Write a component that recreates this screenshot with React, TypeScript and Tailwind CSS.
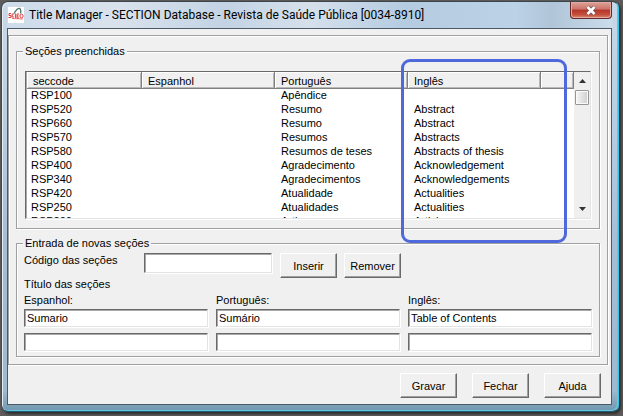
import React from "react";

const rows: [string, string, string, string][] = [
  ["RSP100", "", "Apêndice", ""],
  ["RSP520", "", "Resumo", "Abstract"],
  ["RSP660", "", "Resumo", "Abstract"],
  ["RSP570", "", "Resumos", "Abstracts"],
  ["RSP580", "", "Resumos de teses", "Abstracts of thesis"],
  ["RSP400", "", "Agradecimento", "Acknowledgement"],
  ["RSP340", "", "Agradecimentos", "Acknowledgements"],
  ["RSP420", "", "Atualidade", "Actualities"],
  ["RSP250", "", "Atualidades", "Actualities"],
  ["RSP200", "", "Artigos", "Articles"],
];

const sunken =
  "min-w-0 rounded-none border border-t-[#696969] border-l-[#696969] border-r-[#e3e3e3] border-b-[#e3e3e3] bg-white shadow-[inset_1px_1px_0_#a8a8a8,1px_1px_0_#fff] outline-none";

function PushButton({ children }: { children: React.ReactNode }) {
  return (
    <button
      type="button"
      className="h-[25px] w-[57px] shrink-0 border border-t-white border-l-white border-r-[#696969] border-b-[#696969] bg-[#f0f0f0] text-center text-[11px] leading-4 shadow-[inset_-1px_-1px_0_#a0a0a0]"
    >
      {children}
    </button>
  );
}

function Group({ title, className, children }: { title: string; className: string; children: React.ReactNode }) {
  return (
    <fieldset
      className={
        "relative min-w-0 border border-[#a0a0a0] shadow-[inset_1px_1px_0_#fff,1px_1px_0_#fff] " + className
      }
    >
      <legend className="bg-[#f0f0f0] px-0.5 leading-4">{title}</legend>
      {children}
    </fieldset>
  );
}

function HeaderCell({ children }: { children?: React.ReactNode }) {
  return (
    <th
      scope="col"
      className="h-[17px] border-r border-b border-[#808080] bg-[#f0f0f0] p-0 pt-px pl-1.5 text-left font-normal shadow-[inset_1px_1px_0_#fff,inset_-1px_-1px_0_#b8b8b8]"
    >
      {children}
    </th>
  );
}

function TitleFields({ id, label, value }: { id: string; label: string; value: string }) {
  return (
    <div className="flex min-w-0 flex-col">
      <label htmlFor={id} className="mb-0.5 leading-[14px]">
        {label}
      </label>
      <input id={id} type="text" defaultValue={value} className={"mb-1.5 h-[18px] px-0.5 " + sunken} />
      <input type="text" aria-label={label + " 2"} className={"h-[18px] px-0.5 " + sunken} />
    </div>
  );
}

function Logo() {
  return (
    <svg className="h-4 w-4 shrink-0" viewBox="0 0 16 16" aria-hidden="true">
      <rect width="16" height="16" fill="#fff" />
      <path d="M6 6.5C8 3 10 1 12 1.5C13 3 13 4.5 12.5 6.5" fill="none" stroke="#53766f" strokeWidth="1.3" />
      <g fill="none" stroke="#e03a3a" strokeWidth="1">
        <path d="M3 6.5H1V8.5H3V10.5H0.5M6 7H4.2V10H6M7.4 6.5V11M11 7H9V11H11M9 9H10.6" />
        <ellipse cx="13.5" cy="9" rx="1.6" ry="1.8" />
        <path d="M4 11.5L15 12" strokeWidth="0.7" />
      </g>
    </svg>
  );
}

export default function App() {
  return (
    <div className="min-h-screen bg-[#5e5c5b] pt-px pr-1 pb-1 pl-px font-['Liberation_Sans',Arial,sans-serif] text-[11px] text-black">
      <main className="rounded-[7px] border border-t-[#3c444c] border-r-[#35c5ea] border-b-[#1e5a70] border-l-[#3a4a58] bg-[linear-gradient(180deg,#c9d8e8_0%,#b9cde2_30%,#a5bdd5_60%,#9fb9d0_95%,#7098ae_100%)] pr-1.5 pb-1.5 pl-[5px] shadow-[inset_1px_1px_0_#e4eef6,inset_-1px_-1px_0_#63c6e2,2px_2px_3px_#2b2b2b]">
        <header className="flex h-[26px] items-start justify-between bg-[linear-gradient(90deg,#cddbea_0%,#d9e2ec_18%,#c3d3e4_36%,#d5e0eb_50%,#b4cbe1_66%,#bcd2e6_84%,#b0c5d8_90%,#cbdceb_100%)]">
          <h1 className="flex items-center gap-[5px] pt-1 pl-px font-['Roboto','Noto_Sans',sans-serif] text-xs leading-[18px] whitespace-nowrap">
            <Logo />
            Title Manager - SECTION Database - Revista de Saúde Pública [0034-8910]
          </h1>
          <button
            type="button"
            aria-label="Close"
            className="flex h-[17px] w-[42px] shrink-0 items-center justify-center rounded-b-[4px] border border-t-0 border-[#63282a] bg-[linear-gradient(180deg,#dda49a_0%,#cc7268_45%,#b53529_50%,#c4503c_80%,#dd8e72_100%)] shadow-[inset_0_0_0_1px_#e2aaa0]"
          >
            <svg className="h-[11px] w-3" viewBox="0 0 12 11" aria-hidden="true">
              <path d="M2.5 2L9.5 9M9.5 2L2.5 9" stroke="#70555a" strokeWidth="4" />
              <path d="M2.5 2L9.5 9M9.5 2L2.5 9" stroke="#fff" strokeWidth="2.5" />
            </svg>
          </button>
        </header>

        <div className="border border-[#4c5968] bg-[#f0f0f0] pt-1.5 pb-1.5">
          <div className="mr-[3px] border border-[#a0a0a0] p-[7px] shadow-[inset_1px_1px_0_#fff,1px_1px_0_#fff]">
            <Group title="Seções preenchidas" className="px-2 pt-3 pb-[9px] [&>legend]:-ml-0.5">
              <div className={"flex h-[148px] overflow-hidden " + sunken}>
                <div className="min-w-0 flex-1 overflow-hidden pl-px">
                  <table className="w-full table-fixed border-separate border-spacing-0 leading-[14px]">
                    <colgroup>
                      <col className="w-[115px]" />
                      <col className="w-[133px]" />
                      <col className="w-[133px]" />
                      <col className="w-[133px]" />
                      <col />
                    </colgroup>
                    <thead>
                      <tr>
                        <HeaderCell>seccode</HeaderCell>
                        <HeaderCell>Espanhol</HeaderCell>
                        <HeaderCell>Português</HeaderCell>
                        <HeaderCell>Inglês</HeaderCell>
                        <HeaderCell />
                      </tr>
                    </thead>
                    <tbody className="align-top leading-3">
                      {rows.map(([code, es, pt, en]) => (
                        <tr key={code}>
                          <td className="h-3.5 p-0 pl-1">{code}</td>
                          <td className="p-0 pl-1.5">{es}</td>
                          <td className="p-0 pl-1.5">{pt}</td>
                          <td className="p-0 pl-1.5">{en}</td>
                          <td className="p-0" />
                        </tr>
                      ))}
                    </tbody>
                  </table>
                </div>
                <div className="flex w-4 shrink-0 flex-col items-center bg-[#efefef]">
                  <button type="button" aria-label="Scroll up" className="flex h-[18px] w-full items-center justify-center">
                    <svg className="h-1 w-[7px]" viewBox="0 0 7 4" aria-hidden="true">
                      <path d="M0 4L3.5 0L7 4Z" fill="#333" />
                    </svg>
                  </button>
                  <div className="h-[15px] w-3.5 rounded-[1px] border border-[#979797] bg-[linear-gradient(90deg,#f6f6f6,#e2e2e2_50%,#cfcfcf)] shadow-[inset_0_0_0_1px_#fafafa]" />
                  <button type="button" aria-label="Scroll down" className="mt-auto flex h-[18px] w-full items-center justify-center">
                    <svg className="h-1 w-[7px]" viewBox="0 0 7 4" aria-hidden="true">
                      <path d="M0 0L3.5 4L7 0Z" fill="#333" />
                    </svg>
                  </button>
                </div>
              </div>
              <div className="pointer-events-none absolute top-0 -bottom-[15px] left-96 z-10 w-[166px] rounded-[9px] border-3 border-[#4f69dc]" />
            </Group>

            <Group title="Entrada de novas seções" className="mt-1.5 px-[7px] pt-0.5 pb-[5px] [&>legend]:-ml-px">
              <div className="flex items-start">
                <label htmlFor="code" className="w-[120px] shrink-0 leading-[14px]">
                  Código das seções
                </label>
                <input id="code" type="text" className={"mr-2 h-5 w-32 px-0.5 " + sunken} />
                <div className="flex gap-[7px]">
                  <PushButton>Inserir</PushButton>
                  <PushButton>Remover</PushButton>
                </div>
              </div>
              <p className="leading-3">Título das seções</p>
              <div className="mt-[3px] grid grid-cols-3 gap-2">
                <TitleFields id="es" label="Espanhol:" value="Sumario" />
                <TitleFields id="pt" label="Português:" value="Sumário" />
                <TitleFields id="en" label="Inglês:" value="Table of Contents" />
              </div>
            </Group>
          </div>

          <footer className="flex justify-end gap-[15px] pt-2 pr-2.5">
            <PushButton>Gravar</PushButton>
            <PushButton>Fechar</PushButton>
            <PushButton>Ajuda</PushButton>
          </footer>
        </div>
      </main>
    </div>
  );
}
